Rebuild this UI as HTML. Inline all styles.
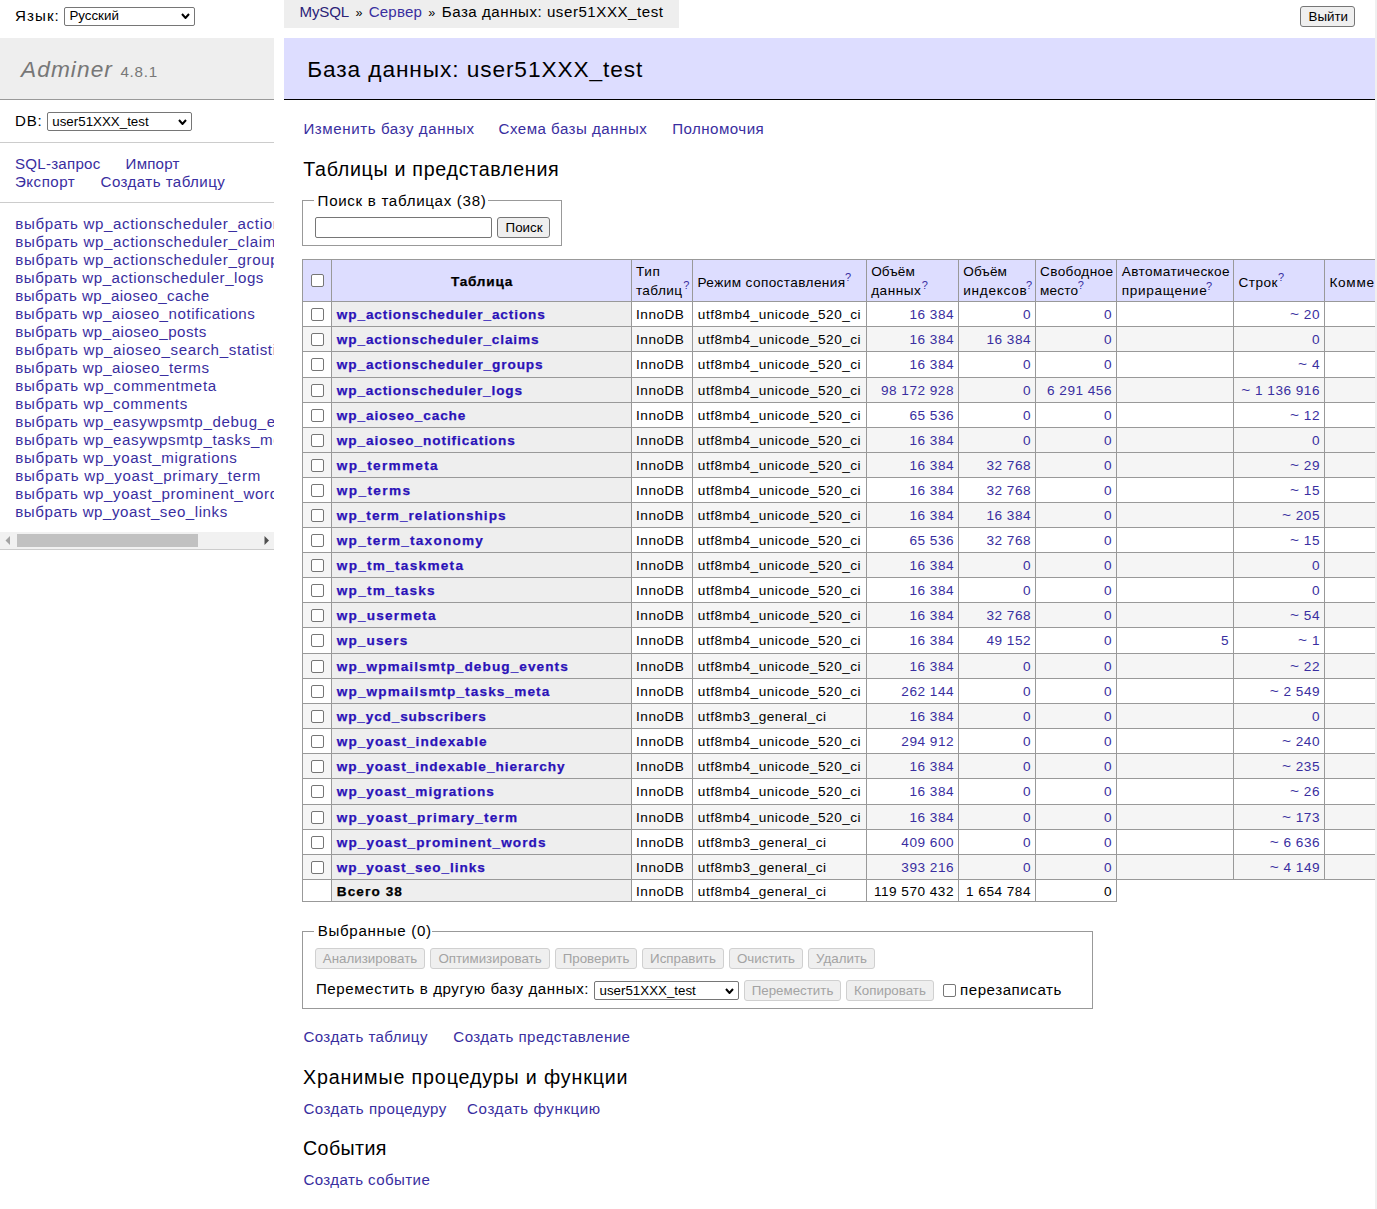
<!DOCTYPE html>
<html><head><meta charset="utf-8"><title>Adminer</title><style>
html,body{margin:0;padding:0;background:#fff;width:1377px;height:1209px;overflow:hidden;position:relative}
.r{position:absolute;box-sizing:content-box}
.t{position:absolute;white-space:pre;line-height:20px;font-family:"Liberation Sans",sans-serif}
.body{font-size:15.1px;font-weight:normal;font-style:normal}
.tbl{font-size:13.6px;font-weight:normal;font-style:normal}
.tblb{font-size:13.6px;font-weight:bold;font-style:normal}
.h2{font-size:22.7px;font-weight:normal;font-style:normal}
.h3{font-size:19.66px;font-weight:normal;font-style:normal}
.logo{font-size:22.7px;font-weight:normal;font-style:italic}
.ver{font-size:15.2px;font-weight:normal;font-style:normal}
.ctl{font-size:13.333px;font-weight:normal;font-style:normal}
.sup{font-size:11.0px;font-weight:normal;font-style:normal}
.bq{font-size:12.5px;font-weight:normal;font-style:normal}
.tblb{-webkit-text-stroke:0.25px}
</style></head>
<body>
<div class="t body" style="left:15px;top:6.00px;color:#000;letter-spacing:1.075px">Язык:</div>
<div class="r" style="left:64px;top:7px;width:129px;height:17px;border:1px solid #767676;background:#fff;border-radius:2px"></div>
<div class="t ctl" style="left:69.4px;top:6.00px;color:#000;letter-spacing:0.0px">Русский</div>
<svg class="r" style="left:180.5px;top:13px" width="9" height="6" viewBox="0 0 9 6"><path d="M1 1 L4.5 5 L8 1" fill="none" stroke="#000" stroke-width="2"/></svg>
<div class="r" style="left:0px;top:38px;width:274px;height:61px;background:#eee"></div>
<div class="r" style="left:0px;top:99px;width:274px;height:1px;background:#999"></div>
<div class="t logo" style="left:21px;top:59.00px;color:#777;letter-spacing:1.067px">Adminer</div>
<div class="t ver" style="left:120.4px;top:62.00px;color:#777;letter-spacing:0.75px">4.8.1</div>
<div class="t body" style="left:15px;top:111.00px;color:#000;letter-spacing:0.75px">DB:</div>
<div class="r" style="left:47px;top:112px;width:143px;height:17px;border:1px solid #767676;background:#fff;border-radius:2px"></div>
<div class="t ctl" style="left:52.3px;top:112.00px;color:#000;letter-spacing:0.0px">user51XXX_test</div>
<svg class="r" style="left:177.5px;top:118.5px" width="9" height="6" viewBox="0 0 9 6"><path d="M1 1 L4.5 5 L8 1" fill="none" stroke="#000" stroke-width="2"/></svg>
<div class="r" style="left:0px;top:142px;width:274px;height:1px;background:#ccc"></div>
<div class="t body" style="left:15px;top:154.00px;color:#392ea0;letter-spacing:0.244px">SQL-запрос</div>
<div class="t body" style="left:125.6px;top:154.00px;color:#392ea0;letter-spacing:0.2px">Импорт</div>
<div class="t body" style="left:15px;top:172.00px;color:#392ea0;letter-spacing:0.5px">Экспорт</div>
<div class="t body" style="left:100.6px;top:172.00px;color:#392ea0;letter-spacing:0.436px">Создать таблицу</div>
<div class="r" style="left:0px;top:202px;width:274px;height:1px;background:#ccc"></div>
<div class="r" style="left:0;top:203px;width:274px;height:329px;overflow:hidden">
<div class="t body" style="left:15.25px;top:11.00px;color:#392ea0;letter-spacing:0.65px">выбрать wp_actionscheduler_actions</div>
<div class="t body" style="left:15.25px;top:29.00px;color:#392ea0;letter-spacing:0.65px">выбрать wp_actionscheduler_claims</div>
<div class="t body" style="left:15.25px;top:47.00px;color:#392ea0;letter-spacing:0.65px">выбрать wp_actionscheduler_groups</div>
<div class="t body" style="left:15.25px;top:65.00px;color:#392ea0;letter-spacing:0.522px">выбрать wp_actionscheduler_logs</div>
<div class="t body" style="left:15.25px;top:83.00px;color:#392ea0;letter-spacing:0.461px">выбрать wp_aioseo_cache</div>
<div class="t body" style="left:15.25px;top:101.00px;color:#392ea0;letter-spacing:0.545px">выбрать wp_aioseo_notifications</div>
<div class="t body" style="left:15.25px;top:119.00px;color:#392ea0;letter-spacing:0.525px">выбрать wp_aioseo_posts</div>
<div class="t body" style="left:15.25px;top:137.00px;color:#392ea0;letter-spacing:0.65px">выбрать wp_aioseo_search_statistics</div>
<div class="t body" style="left:15.25px;top:155.00px;color:#392ea0;letter-spacing:0.566px">выбрать wp_aioseo_terms</div>
<div class="t body" style="left:15.25px;top:173.00px;color:#392ea0;letter-spacing:0.698px">выбрать wp_commentmeta</div>
<div class="t body" style="left:15.25px;top:191.00px;color:#392ea0;letter-spacing:0.653px">выбрать wp_comments</div>
<div class="t body" style="left:15.25px;top:209.00px;color:#392ea0;letter-spacing:0.65px">выбрать wp_easywpsmtp_debug_events</div>
<div class="t body" style="left:15.25px;top:227.00px;color:#392ea0;letter-spacing:0.65px">выбрать wp_easywpsmtp_tasks_meta</div>
<div class="t body" style="left:15.25px;top:245.00px;color:#392ea0;letter-spacing:0.648px">выбрать wp_yoast_migrations</div>
<div class="t body" style="left:15.25px;top:263.00px;color:#392ea0;letter-spacing:0.752px">выбрать wp_yoast_primary_term</div>
<div class="t body" style="left:15.25px;top:281.00px;color:#392ea0;letter-spacing:0.65px">выбрать wp_yoast_prominent_words</div>
<div class="t body" style="left:15.25px;top:299.00px;color:#392ea0;letter-spacing:0.558px">выбрать wp_yoast_seo_links</div>
</div>
<div class="r" style="left:0px;top:532px;width:274px;height:17px;background:#f1f1f1"></div>
<div class="r" style="left:17px;top:534px;width:181px;height:13px;background:#c1c1c1"></div>
<svg class="r" style="left:5px;top:536px" width="6" height="9" viewBox="0 0 6 9"><path d="M5 0 L0.5 4.5 L5 9 Z" fill="#a3a3a3"/></svg>
<svg class="r" style="left:264px;top:536px" width="6" height="9" viewBox="0 0 6 9"><path d="M0.5 0 L5 4.5 L0.5 9 Z" fill="#505050"/></svg>
<div class="r" style="left:0px;top:549px;width:274px;height:1px;background:#ccc"></div>
<div class="r" style="left:284px;top:0px;width:395px;height:28px;background:#eee"></div>
<div class="t body" style="left:299.5px;top:2.00px;color:#2a2278;letter-spacing:-0.15px">MySQL</div>
<div class="t bq" style="left:355.5px;top:3.00px;color:#000;letter-spacing:0.0px">»</div>
<div class="t body" style="left:368.7px;top:2.00px;color:#392ea0;letter-spacing:0.18px">Сервер</div>
<div class="t bq" style="left:428.3px;top:3.00px;color:#000;letter-spacing:0.0px">»</div>
<div class="t body" style="left:441.7px;top:2.00px;color:#000;letter-spacing:0.535px">База данных: user51XXX_test</div>
<div class="r" style="left:1300px;top:6px;width:53px;height:19px;border:1px solid #767676;background:#efefef;border-radius:3px"></div>
<div class="t ctl" style="left:1308.5px;top:7.00px;color:#000;letter-spacing:0.0px">Выйти</div>
<div class="r" style="left:284px;top:38px;width:1091px;height:61px;background:#ddf"></div>
<div class="r" style="left:284px;top:99px;width:1091px;height:1px;background:#000"></div>
<div class="t h2" style="left:307.2px;top:59.00px;color:#000;letter-spacing:0.9px">База данных: user51XXX_test</div>
<div class="t body" style="left:303.4px;top:119.00px;color:#392ea0;letter-spacing:0.584px">Изменить базу данных</div>
<div class="t body" style="left:498.5px;top:119.00px;color:#392ea0;letter-spacing:0.494px">Схема базы данных</div>
<div class="t body" style="left:672.2px;top:119.00px;color:#392ea0;letter-spacing:0.467px">Полномочия</div>
<div class="t h3" style="left:303.2px;top:159.00px;color:#000;letter-spacing:0.7px">Таблицы и представления</div>
<div class="r" style="left:302px;top:200px;width:258px;height:44px;border:1px solid #999;background:transparent;border-radius:0px"></div>
<div class="r" style="left:314px;top:195px;width:174px;height:10px;background:#fff"></div>
<div class="t body" style="left:317.6px;top:191.00px;color:#000;letter-spacing:0.7px">Поиск в таблицах (38)</div>
<div class="r" style="left:315px;top:217px;width:175px;height:19px;border:1px solid #767676;background:#fff;border-radius:2px"></div>
<div class="r" style="left:497px;top:217px;width:51px;height:19px;border:1px solid #767676;background:#efefef;border-radius:3px"></div>
<div class="t ctl" style="left:505.6px;top:218.00px;color:#000;letter-spacing:0.0px">Поиск</div>
<div class="r" style="left:302px;top:259px;width:1073px;height:42px;background:#ddf"></div>
<div class="r" style="left:302px;top:301px;width:1073px;height:25px;background:#fff"></div>
<div class="r" style="left:331px;top:301px;width:300px;height:25px;background:#eee"></div>
<div class="r" style="left:302px;top:326px;width:1073px;height:25px;background:#f5f5f5"></div>
<div class="r" style="left:331px;top:326px;width:300px;height:25px;background:#eee"></div>
<div class="r" style="left:302px;top:351px;width:1073px;height:26px;background:#fff"></div>
<div class="r" style="left:331px;top:351px;width:300px;height:26px;background:#eee"></div>
<div class="r" style="left:302px;top:377px;width:1073px;height:25px;background:#f5f5f5"></div>
<div class="r" style="left:331px;top:377px;width:300px;height:25px;background:#eee"></div>
<div class="r" style="left:302px;top:402px;width:1073px;height:25px;background:#fff"></div>
<div class="r" style="left:331px;top:402px;width:300px;height:25px;background:#eee"></div>
<div class="r" style="left:302px;top:427px;width:1073px;height:25px;background:#f5f5f5"></div>
<div class="r" style="left:331px;top:427px;width:300px;height:25px;background:#eee"></div>
<div class="r" style="left:302px;top:452px;width:1073px;height:25px;background:#f5f5f5"></div>
<div class="r" style="left:331px;top:452px;width:300px;height:25px;background:#eee"></div>
<div class="r" style="left:302px;top:477px;width:1073px;height:25px;background:#fff"></div>
<div class="r" style="left:331px;top:477px;width:300px;height:25px;background:#eee"></div>
<div class="r" style="left:302px;top:502px;width:1073px;height:25px;background:#f5f5f5"></div>
<div class="r" style="left:331px;top:502px;width:300px;height:25px;background:#eee"></div>
<div class="r" style="left:302px;top:527px;width:1073px;height:25px;background:#fff"></div>
<div class="r" style="left:331px;top:527px;width:300px;height:25px;background:#eee"></div>
<div class="r" style="left:302px;top:552px;width:1073px;height:25px;background:#f5f5f5"></div>
<div class="r" style="left:331px;top:552px;width:300px;height:25px;background:#eee"></div>
<div class="r" style="left:302px;top:577px;width:1073px;height:25px;background:#fff"></div>
<div class="r" style="left:331px;top:577px;width:300px;height:25px;background:#eee"></div>
<div class="r" style="left:302px;top:602px;width:1073px;height:25px;background:#f5f5f5"></div>
<div class="r" style="left:331px;top:602px;width:300px;height:25px;background:#eee"></div>
<div class="r" style="left:302px;top:627px;width:1073px;height:26px;background:#fff"></div>
<div class="r" style="left:331px;top:627px;width:300px;height:26px;background:#eee"></div>
<div class="r" style="left:302px;top:653px;width:1073px;height:25px;background:#f5f5f5"></div>
<div class="r" style="left:331px;top:653px;width:300px;height:25px;background:#eee"></div>
<div class="r" style="left:302px;top:678px;width:1073px;height:25px;background:#fff"></div>
<div class="r" style="left:331px;top:678px;width:300px;height:25px;background:#eee"></div>
<div class="r" style="left:302px;top:703px;width:1073px;height:25px;background:#f5f5f5"></div>
<div class="r" style="left:331px;top:703px;width:300px;height:25px;background:#eee"></div>
<div class="r" style="left:302px;top:728px;width:1073px;height:25px;background:#fff"></div>
<div class="r" style="left:331px;top:728px;width:300px;height:25px;background:#eee"></div>
<div class="r" style="left:302px;top:753px;width:1073px;height:25px;background:#f5f5f5"></div>
<div class="r" style="left:331px;top:753px;width:300px;height:25px;background:#eee"></div>
<div class="r" style="left:302px;top:778px;width:1073px;height:26px;background:#fff"></div>
<div class="r" style="left:331px;top:778px;width:300px;height:26px;background:#eee"></div>
<div class="r" style="left:302px;top:804px;width:1073px;height:25px;background:#f5f5f5"></div>
<div class="r" style="left:331px;top:804px;width:300px;height:25px;background:#eee"></div>
<div class="r" style="left:302px;top:829px;width:1073px;height:25px;background:#fff"></div>
<div class="r" style="left:331px;top:829px;width:300px;height:25px;background:#eee"></div>
<div class="r" style="left:302px;top:854px;width:1073px;height:25px;background:#f5f5f5"></div>
<div class="r" style="left:331px;top:854px;width:300px;height:25px;background:#eee"></div>
<div class="r" style="left:331px;top:879px;width:300px;height:22px;background:#eee"></div>
<div class="r" style="left:302px;top:259px;width:1073px;height:1px;background:#999"></div>
<div class="r" style="left:302px;top:301px;width:1073px;height:1px;background:#999"></div>
<div class="r" style="left:302px;top:326px;width:1073px;height:1px;background:#999"></div>
<div class="r" style="left:302px;top:351px;width:1073px;height:1px;background:#999"></div>
<div class="r" style="left:302px;top:377px;width:1073px;height:1px;background:#999"></div>
<div class="r" style="left:302px;top:402px;width:1073px;height:1px;background:#999"></div>
<div class="r" style="left:302px;top:427px;width:1073px;height:1px;background:#999"></div>
<div class="r" style="left:302px;top:452px;width:1073px;height:1px;background:#999"></div>
<div class="r" style="left:302px;top:477px;width:1073px;height:1px;background:#999"></div>
<div class="r" style="left:302px;top:502px;width:1073px;height:1px;background:#999"></div>
<div class="r" style="left:302px;top:527px;width:1073px;height:1px;background:#999"></div>
<div class="r" style="left:302px;top:552px;width:1073px;height:1px;background:#999"></div>
<div class="r" style="left:302px;top:577px;width:1073px;height:1px;background:#999"></div>
<div class="r" style="left:302px;top:602px;width:1073px;height:1px;background:#999"></div>
<div class="r" style="left:302px;top:627px;width:1073px;height:1px;background:#999"></div>
<div class="r" style="left:302px;top:653px;width:1073px;height:1px;background:#999"></div>
<div class="r" style="left:302px;top:678px;width:1073px;height:1px;background:#999"></div>
<div class="r" style="left:302px;top:703px;width:1073px;height:1px;background:#999"></div>
<div class="r" style="left:302px;top:728px;width:1073px;height:1px;background:#999"></div>
<div class="r" style="left:302px;top:753px;width:1073px;height:1px;background:#999"></div>
<div class="r" style="left:302px;top:778px;width:1073px;height:1px;background:#999"></div>
<div class="r" style="left:302px;top:804px;width:1073px;height:1px;background:#999"></div>
<div class="r" style="left:302px;top:829px;width:1073px;height:1px;background:#999"></div>
<div class="r" style="left:302px;top:854px;width:1073px;height:1px;background:#999"></div>
<div class="r" style="left:302px;top:879px;width:1073px;height:1px;background:#999"></div>
<div class="r" style="left:302px;top:901px;width:815px;height:1px;background:#999"></div>
<div class="r" style="left:302px;top:259px;width:1px;height:620px;background:#999"></div>
<div class="r" style="left:331px;top:259px;width:1px;height:620px;background:#999"></div>
<div class="r" style="left:631px;top:259px;width:1px;height:620px;background:#999"></div>
<div class="r" style="left:692px;top:259px;width:1px;height:620px;background:#999"></div>
<div class="r" style="left:866px;top:259px;width:1px;height:620px;background:#999"></div>
<div class="r" style="left:958px;top:259px;width:1px;height:620px;background:#999"></div>
<div class="r" style="left:1035px;top:259px;width:1px;height:620px;background:#999"></div>
<div class="r" style="left:1116px;top:259px;width:1px;height:620px;background:#999"></div>
<div class="r" style="left:1233px;top:259px;width:1px;height:620px;background:#999"></div>
<div class="r" style="left:1324px;top:259px;width:1px;height:620px;background:#999"></div>
<div class="r" style="left:302px;top:879px;width:1px;height:23px;background:#999"></div>
<div class="r" style="left:331px;top:879px;width:1px;height:23px;background:#999"></div>
<div class="r" style="left:631px;top:879px;width:1px;height:23px;background:#999"></div>
<div class="r" style="left:692px;top:879px;width:1px;height:23px;background:#999"></div>
<div class="r" style="left:866px;top:879px;width:1px;height:23px;background:#999"></div>
<div class="r" style="left:958px;top:879px;width:1px;height:23px;background:#999"></div>
<div class="r" style="left:1035px;top:879px;width:1px;height:23px;background:#999"></div>
<div class="r" style="left:1116px;top:879px;width:1px;height:23px;background:#999"></div>
<div class="r" style="left:311px;top:274px;width:11px;height:11px;border:1px solid #767676;border-radius:2px;background:#fff"></div>
<div class="t tblb" style="left:450.9px;top:272.00px;color:#000;letter-spacing:0.8px">Таблица</div>
<div class="t tbl" style="left:635.9px;top:262.00px;color:#000;letter-spacing:0.7px">Тип</div>
<div class="t tbl" style="left:635.9px;top:281.00px;color:#000;letter-spacing:0.4px">таблиц</div>
<div class="t tbl" style="left:871.2px;top:262.00px;color:#000;letter-spacing:0.075px">Объём</div>
<div class="t tbl" style="left:871.2px;top:281.00px;color:#000;letter-spacing:0.5px">данных</div>
<div class="t tbl" style="left:963.3px;top:262.00px;color:#000;letter-spacing:0.075px">Объём</div>
<div class="t tbl" style="left:963.3px;top:281.00px;color:#000;letter-spacing:0.714px">индексов</div>
<div class="t tbl" style="left:1040px;top:262.00px;color:#000;letter-spacing:0.375px">Свободное</div>
<div class="t tbl" style="left:1040px;top:281.00px;color:#000;letter-spacing:0.2px">место</div>
<div class="t tbl" style="left:1121.8px;top:262.00px;color:#000;letter-spacing:0.392px">Автоматическое</div>
<div class="t tbl" style="left:1121.8px;top:281.00px;color:#000;letter-spacing:0.667px">приращение</div>
<div class="t tbl" style="left:697.5px;top:273.00px;color:#000;letter-spacing:0.4px">Режим сопоставления</div>
<div class="t tbl" style="left:1238.6px;top:273.00px;color:#000;letter-spacing:0.45px">Строк</div>
<div class="t tbl" style="left:1329.4px;top:273.00px;color:#000;letter-spacing:0.75px">Комментарий</div>
<div class="t sup" style="left:683.2px;top:275.00px;color:#392ea0;letter-spacing:0.0px">?</div>
<div class="t sup" style="left:844.9px;top:267.00px;color:#392ea0;letter-spacing:0.0px">?</div>
<div class="t sup" style="left:921.8px;top:275.00px;color:#392ea0;letter-spacing:0.0px">?</div>
<div class="t sup" style="left:1026.1px;top:275.00px;color:#392ea0;letter-spacing:0.0px">?</div>
<div class="t sup" style="left:1077.8px;top:275.00px;color:#392ea0;letter-spacing:0.0px">?</div>
<div class="t sup" style="left:1206px;top:276.00px;color:#392ea0;letter-spacing:0.0px">?</div>
<div class="t sup" style="left:1278.1px;top:267.00px;color:#392ea0;letter-spacing:0.0px">?</div>
<div class="r" style="left:311px;top:308px;width:11px;height:11px;border:1px solid #767676;border-radius:2px;background:#fff"></div>
<div class="t tblb" style="left:336.8px;top:305.00px;color:#2a12b8;letter-spacing:0.888px">wp_actionscheduler_actions</div>
<div class="t tbl" style="left:636px;top:305.00px;color:#000;letter-spacing:0.52px">InnoDB</div>
<div class="t tbl" style="left:697.8px;top:305.00px;color:#000;letter-spacing:0.52px">utf8mb4_unicode_520_ci</div>
<div class="t tbl" style="right:423px;top:305.00px;color:#392ea0;letter-spacing:0.5px">16 384</div>
<div class="t tbl" style="right:346px;top:305.00px;color:#392ea0;letter-spacing:0.5px">0</div>
<div class="t tbl" style="right:265px;top:305.00px;color:#392ea0;letter-spacing:0.5px">0</div>
<div class="t tbl" style="right:57px;top:305.00px;color:#392ea0;letter-spacing:0.5px"><span style="font-size:15.5px;line-height:0">~</span> 20</div>
<div class="r" style="left:311px;top:333px;width:11px;height:11px;border:1px solid #767676;border-radius:2px;background:#fff"></div>
<div class="t tblb" style="left:336.8px;top:330.00px;color:#2a12b8;letter-spacing:0.883px">wp_actionscheduler_claims</div>
<div class="t tbl" style="left:636px;top:330.00px;color:#000;letter-spacing:0.52px">InnoDB</div>
<div class="t tbl" style="left:697.8px;top:330.00px;color:#000;letter-spacing:0.52px">utf8mb4_unicode_520_ci</div>
<div class="t tbl" style="right:423px;top:330.00px;color:#392ea0;letter-spacing:0.5px">16 384</div>
<div class="t tbl" style="right:346px;top:330.00px;color:#392ea0;letter-spacing:0.5px">16 384</div>
<div class="t tbl" style="right:265px;top:330.00px;color:#392ea0;letter-spacing:0.5px">0</div>
<div class="t tbl" style="right:57px;top:330.00px;color:#392ea0;letter-spacing:0.5px">0</div>
<div class="r" style="left:311px;top:358px;width:11px;height:11px;border:1px solid #767676;border-radius:2px;background:#fff"></div>
<div class="t tblb" style="left:336.8px;top:355.00px;color:#2a12b8;letter-spacing:0.896px">wp_actionscheduler_groups</div>
<div class="t tbl" style="left:636px;top:355.00px;color:#000;letter-spacing:0.52px">InnoDB</div>
<div class="t tbl" style="left:697.8px;top:355.00px;color:#000;letter-spacing:0.52px">utf8mb4_unicode_520_ci</div>
<div class="t tbl" style="right:423px;top:355.00px;color:#392ea0;letter-spacing:0.5px">16 384</div>
<div class="t tbl" style="right:346px;top:355.00px;color:#392ea0;letter-spacing:0.5px">0</div>
<div class="t tbl" style="right:265px;top:355.00px;color:#392ea0;letter-spacing:0.5px">0</div>
<div class="t tbl" style="right:57px;top:355.00px;color:#392ea0;letter-spacing:0.5px"><span style="font-size:15.5px;line-height:0">~</span> 4</div>
<div class="r" style="left:311px;top:384px;width:11px;height:11px;border:1px solid #767676;border-radius:2px;background:#fff"></div>
<div class="t tblb" style="left:336.8px;top:381.00px;color:#2a12b8;letter-spacing:0.868px">wp_actionscheduler_logs</div>
<div class="t tbl" style="left:636px;top:381.00px;color:#000;letter-spacing:0.52px">InnoDB</div>
<div class="t tbl" style="left:697.8px;top:381.00px;color:#000;letter-spacing:0.52px">utf8mb4_unicode_520_ci</div>
<div class="t tbl" style="right:423px;top:381.00px;color:#392ea0;letter-spacing:0.5px">98 172 928</div>
<div class="t tbl" style="right:346px;top:381.00px;color:#392ea0;letter-spacing:0.5px">0</div>
<div class="t tbl" style="right:265px;top:381.00px;color:#392ea0;letter-spacing:0.5px">6 291 456</div>
<div class="t tbl" style="right:57px;top:381.00px;color:#392ea0;letter-spacing:0.5px"><span style="font-size:15.5px;line-height:0">~</span> 1 136 916</div>
<div class="r" style="left:311px;top:409px;width:11px;height:11px;border:1px solid #767676;border-radius:2px;background:#fff"></div>
<div class="t tblb" style="left:336.8px;top:406.00px;color:#2a12b8;letter-spacing:0.929px">wp_aioseo_cache</div>
<div class="t tbl" style="left:636px;top:406.00px;color:#000;letter-spacing:0.52px">InnoDB</div>
<div class="t tbl" style="left:697.8px;top:406.00px;color:#000;letter-spacing:0.52px">utf8mb4_unicode_520_ci</div>
<div class="t tbl" style="right:423px;top:406.00px;color:#392ea0;letter-spacing:0.5px">65 536</div>
<div class="t tbl" style="right:346px;top:406.00px;color:#392ea0;letter-spacing:0.5px">0</div>
<div class="t tbl" style="right:265px;top:406.00px;color:#392ea0;letter-spacing:0.5px">0</div>
<div class="t tbl" style="right:57px;top:406.00px;color:#392ea0;letter-spacing:0.5px"><span style="font-size:15.5px;line-height:0">~</span> 12</div>
<div class="r" style="left:311px;top:434px;width:11px;height:11px;border:1px solid #767676;border-radius:2px;background:#fff"></div>
<div class="t tblb" style="left:336.8px;top:431.00px;color:#2a12b8;letter-spacing:0.918px">wp_aioseo_notifications</div>
<div class="t tbl" style="left:636px;top:431.00px;color:#000;letter-spacing:0.52px">InnoDB</div>
<div class="t tbl" style="left:697.8px;top:431.00px;color:#000;letter-spacing:0.52px">utf8mb4_unicode_520_ci</div>
<div class="t tbl" style="right:423px;top:431.00px;color:#392ea0;letter-spacing:0.5px">16 384</div>
<div class="t tbl" style="right:346px;top:431.00px;color:#392ea0;letter-spacing:0.5px">0</div>
<div class="t tbl" style="right:265px;top:431.00px;color:#392ea0;letter-spacing:0.5px">0</div>
<div class="t tbl" style="right:57px;top:431.00px;color:#392ea0;letter-spacing:0.5px">0</div>
<div class="r" style="left:311px;top:459px;width:11px;height:11px;border:1px solid #767676;border-radius:2px;background:#fff"></div>
<div class="t tblb" style="left:336.8px;top:456.00px;color:#2a12b8;letter-spacing:1.32px">wp_termmeta</div>
<div class="t tbl" style="left:636px;top:456.00px;color:#000;letter-spacing:0.52px">InnoDB</div>
<div class="t tbl" style="left:697.8px;top:456.00px;color:#000;letter-spacing:0.52px">utf8mb4_unicode_520_ci</div>
<div class="t tbl" style="right:423px;top:456.00px;color:#392ea0;letter-spacing:0.5px">16 384</div>
<div class="t tbl" style="right:346px;top:456.00px;color:#392ea0;letter-spacing:0.5px">32 768</div>
<div class="t tbl" style="right:265px;top:456.00px;color:#392ea0;letter-spacing:0.5px">0</div>
<div class="t tbl" style="right:57px;top:456.00px;color:#392ea0;letter-spacing:0.5px"><span style="font-size:15.5px;line-height:0">~</span> 29</div>
<div class="r" style="left:311px;top:484px;width:11px;height:11px;border:1px solid #767676;border-radius:2px;background:#fff"></div>
<div class="t tblb" style="left:336.8px;top:481.00px;color:#2a12b8;letter-spacing:1.386px">wp_terms</div>
<div class="t tbl" style="left:636px;top:481.00px;color:#000;letter-spacing:0.52px">InnoDB</div>
<div class="t tbl" style="left:697.8px;top:481.00px;color:#000;letter-spacing:0.52px">utf8mb4_unicode_520_ci</div>
<div class="t tbl" style="right:423px;top:481.00px;color:#392ea0;letter-spacing:0.5px">16 384</div>
<div class="t tbl" style="right:346px;top:481.00px;color:#392ea0;letter-spacing:0.5px">32 768</div>
<div class="t tbl" style="right:265px;top:481.00px;color:#392ea0;letter-spacing:0.5px">0</div>
<div class="t tbl" style="right:57px;top:481.00px;color:#392ea0;letter-spacing:0.5px"><span style="font-size:15.5px;line-height:0">~</span> 15</div>
<div class="r" style="left:311px;top:509px;width:11px;height:11px;border:1px solid #767676;border-radius:2px;background:#fff"></div>
<div class="t tblb" style="left:336.8px;top:506.00px;color:#2a12b8;letter-spacing:1.035px">wp_term_relationships</div>
<div class="t tbl" style="left:636px;top:506.00px;color:#000;letter-spacing:0.52px">InnoDB</div>
<div class="t tbl" style="left:697.8px;top:506.00px;color:#000;letter-spacing:0.52px">utf8mb4_unicode_520_ci</div>
<div class="t tbl" style="right:423px;top:506.00px;color:#392ea0;letter-spacing:0.5px">16 384</div>
<div class="t tbl" style="right:346px;top:506.00px;color:#392ea0;letter-spacing:0.5px">16 384</div>
<div class="t tbl" style="right:265px;top:506.00px;color:#392ea0;letter-spacing:0.5px">0</div>
<div class="t tbl" style="right:57px;top:506.00px;color:#392ea0;letter-spacing:0.5px"><span style="font-size:15.5px;line-height:0">~</span> 205</div>
<div class="r" style="left:311px;top:534px;width:11px;height:11px;border:1px solid #767676;border-radius:2px;background:#fff"></div>
<div class="t tblb" style="left:336.8px;top:531.00px;color:#2a12b8;letter-spacing:1.227px">wp_term_taxonomy</div>
<div class="t tbl" style="left:636px;top:531.00px;color:#000;letter-spacing:0.52px">InnoDB</div>
<div class="t tbl" style="left:697.8px;top:531.00px;color:#000;letter-spacing:0.52px">utf8mb4_unicode_520_ci</div>
<div class="t tbl" style="right:423px;top:531.00px;color:#392ea0;letter-spacing:0.5px">65 536</div>
<div class="t tbl" style="right:346px;top:531.00px;color:#392ea0;letter-spacing:0.5px">32 768</div>
<div class="t tbl" style="right:265px;top:531.00px;color:#392ea0;letter-spacing:0.5px">0</div>
<div class="t tbl" style="right:57px;top:531.00px;color:#392ea0;letter-spacing:0.5px"><span style="font-size:15.5px;line-height:0">~</span> 15</div>
<div class="r" style="left:311px;top:559px;width:11px;height:11px;border:1px solid #767676;border-radius:2px;background:#fff"></div>
<div class="t tblb" style="left:336.8px;top:556.00px;color:#2a12b8;letter-spacing:1.277px">wp_tm_taskmeta</div>
<div class="t tbl" style="left:636px;top:556.00px;color:#000;letter-spacing:0.52px">InnoDB</div>
<div class="t tbl" style="left:697.8px;top:556.00px;color:#000;letter-spacing:0.52px">utf8mb4_unicode_520_ci</div>
<div class="t tbl" style="right:423px;top:556.00px;color:#392ea0;letter-spacing:0.5px">16 384</div>
<div class="t tbl" style="right:346px;top:556.00px;color:#392ea0;letter-spacing:0.5px">0</div>
<div class="t tbl" style="right:265px;top:556.00px;color:#392ea0;letter-spacing:0.5px">0</div>
<div class="t tbl" style="right:57px;top:556.00px;color:#392ea0;letter-spacing:0.5px">0</div>
<div class="r" style="left:311px;top:584px;width:11px;height:11px;border:1px solid #767676;border-radius:2px;background:#fff"></div>
<div class="t tblb" style="left:336.8px;top:581.00px;color:#2a12b8;letter-spacing:1.25px">wp_tm_tasks</div>
<div class="t tbl" style="left:636px;top:581.00px;color:#000;letter-spacing:0.52px">InnoDB</div>
<div class="t tbl" style="left:697.8px;top:581.00px;color:#000;letter-spacing:0.52px">utf8mb4_unicode_520_ci</div>
<div class="t tbl" style="right:423px;top:581.00px;color:#392ea0;letter-spacing:0.5px">16 384</div>
<div class="t tbl" style="right:346px;top:581.00px;color:#392ea0;letter-spacing:0.5px">0</div>
<div class="t tbl" style="right:265px;top:581.00px;color:#392ea0;letter-spacing:0.5px">0</div>
<div class="t tbl" style="right:57px;top:581.00px;color:#392ea0;letter-spacing:0.5px">0</div>
<div class="r" style="left:311px;top:609px;width:11px;height:11px;border:1px solid #767676;border-radius:2px;background:#fff"></div>
<div class="t tblb" style="left:336.8px;top:606.00px;color:#2a12b8;letter-spacing:1.18px">wp_usermeta</div>
<div class="t tbl" style="left:636px;top:606.00px;color:#000;letter-spacing:0.52px">InnoDB</div>
<div class="t tbl" style="left:697.8px;top:606.00px;color:#000;letter-spacing:0.52px">utf8mb4_unicode_520_ci</div>
<div class="t tbl" style="right:423px;top:606.00px;color:#392ea0;letter-spacing:0.5px">16 384</div>
<div class="t tbl" style="right:346px;top:606.00px;color:#392ea0;letter-spacing:0.5px">32 768</div>
<div class="t tbl" style="right:265px;top:606.00px;color:#392ea0;letter-spacing:0.5px">0</div>
<div class="t tbl" style="right:57px;top:606.00px;color:#392ea0;letter-spacing:0.5px"><span style="font-size:15.5px;line-height:0">~</span> 54</div>
<div class="r" style="left:311px;top:634px;width:11px;height:11px;border:1px solid #767676;border-radius:2px;background:#fff"></div>
<div class="t tblb" style="left:336.8px;top:631.00px;color:#2a12b8;letter-spacing:1.1px">wp_users</div>
<div class="t tbl" style="left:636px;top:631.00px;color:#000;letter-spacing:0.52px">InnoDB</div>
<div class="t tbl" style="left:697.8px;top:631.00px;color:#000;letter-spacing:0.52px">utf8mb4_unicode_520_ci</div>
<div class="t tbl" style="right:423px;top:631.00px;color:#392ea0;letter-spacing:0.5px">16 384</div>
<div class="t tbl" style="right:346px;top:631.00px;color:#392ea0;letter-spacing:0.5px">49 152</div>
<div class="t tbl" style="right:265px;top:631.00px;color:#392ea0;letter-spacing:0.5px">0</div>
<div class="t tbl" style="right:148px;top:631.00px;color:#392ea0;letter-spacing:0.5px">5</div>
<div class="t tbl" style="right:57px;top:631.00px;color:#392ea0;letter-spacing:0.5px"><span style="font-size:15.5px;line-height:0">~</span> 1</div>
<div class="r" style="left:311px;top:660px;width:11px;height:11px;border:1px solid #767676;border-radius:2px;background:#fff"></div>
<div class="t tblb" style="left:336.8px;top:657.00px;color:#2a12b8;letter-spacing:1.08px">wp_wpmailsmtp_debug_events</div>
<div class="t tbl" style="left:636px;top:657.00px;color:#000;letter-spacing:0.52px">InnoDB</div>
<div class="t tbl" style="left:697.8px;top:657.00px;color:#000;letter-spacing:0.52px">utf8mb4_unicode_520_ci</div>
<div class="t tbl" style="right:423px;top:657.00px;color:#392ea0;letter-spacing:0.5px">16 384</div>
<div class="t tbl" style="right:346px;top:657.00px;color:#392ea0;letter-spacing:0.5px">0</div>
<div class="t tbl" style="right:265px;top:657.00px;color:#392ea0;letter-spacing:0.5px">0</div>
<div class="t tbl" style="right:57px;top:657.00px;color:#392ea0;letter-spacing:0.5px"><span style="font-size:15.5px;line-height:0">~</span> 22</div>
<div class="r" style="left:311px;top:685px;width:11px;height:11px;border:1px solid #767676;border-radius:2px;background:#fff"></div>
<div class="t tblb" style="left:336.8px;top:682.00px;color:#2a12b8;letter-spacing:1.126px">wp_wpmailsmtp_tasks_meta</div>
<div class="t tbl" style="left:636px;top:682.00px;color:#000;letter-spacing:0.52px">InnoDB</div>
<div class="t tbl" style="left:697.8px;top:682.00px;color:#000;letter-spacing:0.52px">utf8mb4_unicode_520_ci</div>
<div class="t tbl" style="right:423px;top:682.00px;color:#392ea0;letter-spacing:0.5px">262 144</div>
<div class="t tbl" style="right:346px;top:682.00px;color:#392ea0;letter-spacing:0.5px">0</div>
<div class="t tbl" style="right:265px;top:682.00px;color:#392ea0;letter-spacing:0.5px">0</div>
<div class="t tbl" style="right:57px;top:682.00px;color:#392ea0;letter-spacing:0.5px"><span style="font-size:15.5px;line-height:0">~</span> 2 549</div>
<div class="r" style="left:311px;top:710px;width:11px;height:11px;border:1px solid #767676;border-radius:2px;background:#fff"></div>
<div class="t tblb" style="left:336.8px;top:707.00px;color:#2a12b8;letter-spacing:0.847px">wp_ycd_subscribers</div>
<div class="t tbl" style="left:636px;top:707.00px;color:#000;letter-spacing:0.52px">InnoDB</div>
<div class="t tbl" style="left:697.8px;top:707.00px;color:#000;letter-spacing:0.52px">utf8mb3_general_ci</div>
<div class="t tbl" style="right:423px;top:707.00px;color:#392ea0;letter-spacing:0.5px">16 384</div>
<div class="t tbl" style="right:346px;top:707.00px;color:#392ea0;letter-spacing:0.5px">0</div>
<div class="t tbl" style="right:265px;top:707.00px;color:#392ea0;letter-spacing:0.5px">0</div>
<div class="t tbl" style="right:57px;top:707.00px;color:#392ea0;letter-spacing:0.5px">0</div>
<div class="r" style="left:311px;top:735px;width:11px;height:11px;border:1px solid #767676;border-radius:2px;background:#fff"></div>
<div class="t tblb" style="left:336.8px;top:732.00px;color:#2a12b8;letter-spacing:1.035px">wp_yoast_indexable</div>
<div class="t tbl" style="left:636px;top:732.00px;color:#000;letter-spacing:0.52px">InnoDB</div>
<div class="t tbl" style="left:697.8px;top:732.00px;color:#000;letter-spacing:0.52px">utf8mb4_unicode_520_ci</div>
<div class="t tbl" style="right:423px;top:732.00px;color:#392ea0;letter-spacing:0.5px">294 912</div>
<div class="t tbl" style="right:346px;top:732.00px;color:#392ea0;letter-spacing:0.5px">0</div>
<div class="t tbl" style="right:265px;top:732.00px;color:#392ea0;letter-spacing:0.5px">0</div>
<div class="t tbl" style="right:57px;top:732.00px;color:#392ea0;letter-spacing:0.5px"><span style="font-size:15.5px;line-height:0">~</span> 240</div>
<div class="r" style="left:311px;top:760px;width:11px;height:11px;border:1px solid #767676;border-radius:2px;background:#fff"></div>
<div class="t tblb" style="left:336.8px;top:757.00px;color:#2a12b8;letter-spacing:0.993px">wp_yoast_indexable_hierarchy</div>
<div class="t tbl" style="left:636px;top:757.00px;color:#000;letter-spacing:0.52px">InnoDB</div>
<div class="t tbl" style="left:697.8px;top:757.00px;color:#000;letter-spacing:0.52px">utf8mb4_unicode_520_ci</div>
<div class="t tbl" style="right:423px;top:757.00px;color:#392ea0;letter-spacing:0.5px">16 384</div>
<div class="t tbl" style="right:346px;top:757.00px;color:#392ea0;letter-spacing:0.5px">0</div>
<div class="t tbl" style="right:265px;top:757.00px;color:#392ea0;letter-spacing:0.5px">0</div>
<div class="t tbl" style="right:57px;top:757.00px;color:#392ea0;letter-spacing:0.5px"><span style="font-size:15.5px;line-height:0">~</span> 235</div>
<div class="r" style="left:311px;top:785px;width:11px;height:11px;border:1px solid #767676;border-radius:2px;background:#fff"></div>
<div class="t tblb" style="left:336.8px;top:782.00px;color:#2a12b8;letter-spacing:1.006px">wp_yoast_migrations</div>
<div class="t tbl" style="left:636px;top:782.00px;color:#000;letter-spacing:0.52px">InnoDB</div>
<div class="t tbl" style="left:697.8px;top:782.00px;color:#000;letter-spacing:0.52px">utf8mb4_unicode_520_ci</div>
<div class="t tbl" style="right:423px;top:782.00px;color:#392ea0;letter-spacing:0.5px">16 384</div>
<div class="t tbl" style="right:346px;top:782.00px;color:#392ea0;letter-spacing:0.5px">0</div>
<div class="t tbl" style="right:265px;top:782.00px;color:#392ea0;letter-spacing:0.5px">0</div>
<div class="t tbl" style="right:57px;top:782.00px;color:#392ea0;letter-spacing:0.5px"><span style="font-size:15.5px;line-height:0">~</span> 26</div>
<div class="r" style="left:311px;top:811px;width:11px;height:11px;border:1px solid #767676;border-radius:2px;background:#fff"></div>
<div class="t tblb" style="left:336.8px;top:808.00px;color:#2a12b8;letter-spacing:1.195px">wp_yoast_primary_term</div>
<div class="t tbl" style="left:636px;top:808.00px;color:#000;letter-spacing:0.52px">InnoDB</div>
<div class="t tbl" style="left:697.8px;top:808.00px;color:#000;letter-spacing:0.52px">utf8mb4_unicode_520_ci</div>
<div class="t tbl" style="right:423px;top:808.00px;color:#392ea0;letter-spacing:0.5px">16 384</div>
<div class="t tbl" style="right:346px;top:808.00px;color:#392ea0;letter-spacing:0.5px">0</div>
<div class="t tbl" style="right:265px;top:808.00px;color:#392ea0;letter-spacing:0.5px">0</div>
<div class="t tbl" style="right:57px;top:808.00px;color:#392ea0;letter-spacing:0.5px"><span style="font-size:15.5px;line-height:0">~</span> 173</div>
<div class="r" style="left:311px;top:836px;width:11px;height:11px;border:1px solid #767676;border-radius:2px;background:#fff"></div>
<div class="t tblb" style="left:336.8px;top:833.00px;color:#2a12b8;letter-spacing:1.096px">wp_yoast_prominent_words</div>
<div class="t tbl" style="left:636px;top:833.00px;color:#000;letter-spacing:0.52px">InnoDB</div>
<div class="t tbl" style="left:697.8px;top:833.00px;color:#000;letter-spacing:0.52px">utf8mb3_general_ci</div>
<div class="t tbl" style="right:423px;top:833.00px;color:#392ea0;letter-spacing:0.5px">409 600</div>
<div class="t tbl" style="right:346px;top:833.00px;color:#392ea0;letter-spacing:0.5px">0</div>
<div class="t tbl" style="right:265px;top:833.00px;color:#392ea0;letter-spacing:0.5px">0</div>
<div class="t tbl" style="right:57px;top:833.00px;color:#392ea0;letter-spacing:0.5px"><span style="font-size:15.5px;line-height:0">~</span> 6 636</div>
<div class="r" style="left:311px;top:861px;width:11px;height:11px;border:1px solid #767676;border-radius:2px;background:#fff"></div>
<div class="t tblb" style="left:336.8px;top:858.00px;color:#2a12b8;letter-spacing:0.976px">wp_yoast_seo_links</div>
<div class="t tbl" style="left:636px;top:858.00px;color:#000;letter-spacing:0.52px">InnoDB</div>
<div class="t tbl" style="left:697.8px;top:858.00px;color:#000;letter-spacing:0.52px">utf8mb3_general_ci</div>
<div class="t tbl" style="right:423px;top:858.00px;color:#392ea0;letter-spacing:0.5px">393 216</div>
<div class="t tbl" style="right:346px;top:858.00px;color:#392ea0;letter-spacing:0.5px">0</div>
<div class="t tbl" style="right:265px;top:858.00px;color:#392ea0;letter-spacing:0.5px">0</div>
<div class="t tbl" style="right:57px;top:858.00px;color:#392ea0;letter-spacing:0.5px"><span style="font-size:15.5px;line-height:0">~</span> 4 149</div>
<div class="t tblb" style="left:336.8px;top:882.00px;color:#000;letter-spacing:1.071px">Всего 38</div>
<div class="t tbl" style="left:636px;top:882.00px;color:#000;letter-spacing:0.52px">InnoDB</div>
<div class="t tbl" style="left:697.8px;top:882.00px;color:#000;letter-spacing:0.52px">utf8mb4_general_ci</div>
<div class="t tbl" style="right:423px;top:882.00px;color:#000;letter-spacing:0.5px">119 570 432</div>
<div class="t tbl" style="right:346px;top:882.00px;color:#000;letter-spacing:0.5px">1 654 784</div>
<div class="t tbl" style="right:265px;top:882.00px;color:#000;letter-spacing:0.5px">0</div>
<div class="r" style="left:302px;top:931px;width:789px;height:76px;border:1px solid #999;background:transparent;border-radius:0px"></div>
<div class="r" style="left:314px;top:925px;width:118px;height:11px;background:#fff"></div>
<div class="t body" style="left:317.7px;top:921.00px;color:#000;letter-spacing:0.708px">Выбранные (0)</div>
<div class="r" style="left:315px;top:948px;width:108px;height:19px;border:1px solid #d0d0d0;background:#efefef;border-radius:3px"></div>
<div class="t ctl" style="left:315px;width:110px;text-align:center;top:949px;color:#a3a3a3">Анализировать</div>
<div class="r" style="left:430px;top:948px;width:118px;height:19px;border:1px solid #d0d0d0;background:#efefef;border-radius:3px"></div>
<div class="t ctl" style="left:430px;width:120px;text-align:center;top:949px;color:#a3a3a3">Оптимизировать</div>
<div class="r" style="left:555px;top:948px;width:80px;height:19px;border:1px solid #d0d0d0;background:#efefef;border-radius:3px"></div>
<div class="t ctl" style="left:555px;width:82px;text-align:center;top:949px;color:#a3a3a3">Проверить</div>
<div class="r" style="left:642px;top:948px;width:80px;height:19px;border:1px solid #d0d0d0;background:#efefef;border-radius:3px"></div>
<div class="t ctl" style="left:642px;width:82px;text-align:center;top:949px;color:#a3a3a3">Исправить</div>
<div class="r" style="left:729px;top:948px;width:72px;height:19px;border:1px solid #d0d0d0;background:#efefef;border-radius:3px"></div>
<div class="t ctl" style="left:729px;width:74px;text-align:center;top:949px;color:#a3a3a3">Очистить</div>
<div class="r" style="left:808px;top:948px;width:65px;height:19px;border:1px solid #d0d0d0;background:#efefef;border-radius:3px"></div>
<div class="t ctl" style="left:808px;width:67px;text-align:center;top:949px;color:#a3a3a3">Удалить</div>
<div class="t body" style="left:315.9px;top:979.00px;color:#000;letter-spacing:0.597px">Переместить в другую базу данных:</div>
<div class="r" style="left:594px;top:981px;width:143px;height:17px;border:1px solid #767676;background:#fff;border-radius:2px"></div>
<div class="t ctl" style="left:599.5px;top:981.00px;color:#000;letter-spacing:0.0px">user51XXX_test</div>
<svg class="r" style="left:724.5px;top:988px" width="9" height="6" viewBox="0 0 9 6"><path d="M1 1 L4.5 5 L8 1" fill="none" stroke="#000" stroke-width="2"/></svg>
<div class="r" style="left:744px;top:980px;width:95px;height:19px;border:1px solid #d0d0d0;background:#efefef;border-radius:3px"></div>
<div class="t ctl" style="left:744px;width:97px;text-align:center;top:981px;color:#a3a3a3">Переместить</div>
<div class="r" style="left:846px;top:980px;width:86px;height:19px;border:1px solid #d0d0d0;background:#efefef;border-radius:3px"></div>
<div class="t ctl" style="left:846px;width:88px;text-align:center;top:981px;color:#a3a3a3">Копировать</div>
<div class="r" style="left:943px;top:984px;width:11px;height:11px;border:1px solid #767676;border-radius:2px;background:#fff"></div>
<div class="t body" style="left:960px;top:980.00px;color:#000;letter-spacing:0.545px">перезаписать</div>
<div class="t body" style="left:303.4px;top:1027.00px;color:#392ea0;letter-spacing:0.429px">Создать таблицу</div>
<div class="t body" style="left:453.3px;top:1027.00px;color:#392ea0;letter-spacing:0.45px">Создать представление</div>
<div class="t h3" style="left:303px;top:1067.00px;color:#000;letter-spacing:0.859px">Хранимые процедуры и функции</div>
<div class="t body" style="left:303.4px;top:1099.00px;color:#392ea0;letter-spacing:0.494px">Создать процедуру</div>
<div class="t body" style="left:467.1px;top:1099.00px;color:#392ea0;letter-spacing:0.6px">Создать функцию</div>
<div class="t h3" style="left:303px;top:1138.00px;color:#000;letter-spacing:0.383px">События</div>
<div class="t body" style="left:303.4px;top:1170.00px;color:#392ea0;letter-spacing:0.393px">Создать событие</div>
<div class="r" style="left:1375px;top:0px;width:2px;height:1209px;background:#f0f0f0"></div>
</body></html>
